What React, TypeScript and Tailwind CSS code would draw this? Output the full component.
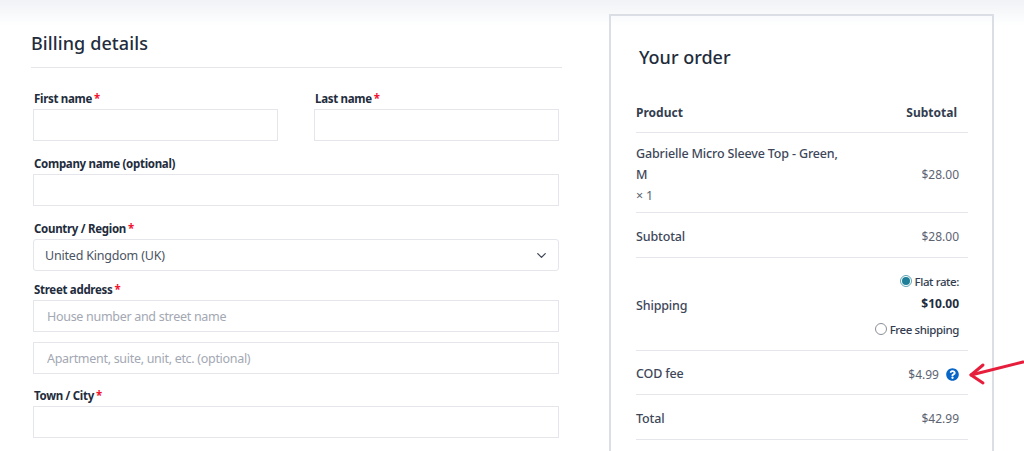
import type { ReactNode } from "react";
import { FaQuestionCircle } from "react-icons/fa";
import { ChevronDown } from "lucide-react";

function Label({ text, required }: { text: string; required?: boolean }) {
  return (
    <label className="block h-[21px] pl-px text-[11.5px] leading-[21px] font-bold tracking-[-0.3px] text-[#222c3c]">
      {text}
      {required && <span className="ml-[2px] text-[#f0142f]">*</span>}
    </label>
  );
}

function Input({ placeholder }: { placeholder?: string }) {
  return (
    <input
      placeholder={placeholder}
      className="block h-[32px] w-full border-[1.5px] border-[#e4e6ec] bg-white px-[13px] pt-px text-[12.5px] tracking-[-0.3px] outline-none placeholder:text-[#a3a8b3]"
    />
  );
}

function Row({
  label,
  value,
  className,
}: {
  label: ReactNode;
  value: ReactNode;
  className: string;
}) {
  return (
    <div
      className={`flex items-center justify-between border-b border-[#e4e6ec] pt-[4px] pr-[9px] text-[12.5px] font-medium tracking-[-0.15px] text-[#3d4759] ${className}`}
    >
      {label}
      {value}
    </div>
  );
}

function Price({ children }: { children: ReactNode }) {
  return <span className="text-[12px] font-normal tracking-normal text-[#5c6472]">{children}</span>;
}

export default function App() {
  return (
    <div
      className="flex h-[451px] w-[1024px] items-start overflow-hidden bg-[linear-gradient(to_bottom,#f0f2f6,#ffffff_26px)] pt-[14px] pl-[31px]"
      style={{ fontFamily: '"Noto Sans", sans-serif' }}
    >
      <div className="w-[531px]">
        <h3 className="h-[54px] border-b border-[#e4e6ea] pt-[15px] text-[18px] leading-[28px] font-medium tracking-[0.1px] text-[#222c3c]">
          Billing details
        </h3>
        <div className="pt-[20px] pr-[3px] pl-[2px]">
          <div className="grid grid-cols-[245px_245px] gap-x-[36px]">
            <div>
              <Label text="First name" required />
              <Input />
            </div>
            <div>
              <Label text="Last name" required />
              <Input />
            </div>
          </div>
          <div className="mt-[12px]">
            <Label text="Company name (optional)" />
            <Input />
          </div>
          <div className="mt-[12px]">
            <Label text="Country / Region" required />
            <div className="flex h-[32px] items-center justify-between rounded-[3px] border-[1.5px] border-[#e4e6ec] pr-[9px] pl-[11px] text-[12.5px] tracking-[-0.2px] text-[#4b5462]">
              <span className="pt-[2px]">United Kingdom (UK)</span>
              <ChevronDown size={15} strokeWidth={2} className="text-[#3d4759]" />
            </div>
          </div>
          <div className="mt-[8px]">
            <Label text="Street address" required />
            <Input placeholder="House number and street name" />
            <div className="mt-[10px]">
              <Input placeholder="Apartment, suite, unit, etc. (optional)" />
            </div>
          </div>
          <div className="mt-[11px]">
            <Label text="Town / City" required />
            <Input />
          </div>
        </div>
      </div>

      <div className="relative ml-[47px] h-[450px] w-[385px] shrink-0 border-2 border-[#dcdee6] pr-[24px] pl-[25px]">
        <h3 className="ml-[3px] pt-[27px] text-[18px] leading-[28px] font-medium text-[#222c3c]">
          Your order
        </h3>
        <div className="mt-[14px]">
          <div className="flex h-[48px] items-center justify-between border-b border-[#e4e6ec] pt-[9px] pr-[11px] text-[12px] font-bold text-[#333d4f]">
            <span>Product</span>
            <span>Subtotal</span>
          </div>
          <Row
            className="h-[80px]"
            label={
              <div className="w-[212px] leading-[21px]">
                Gabrielle Micro Sleeve Top - Green, M
                <div className="font-normal text-[#5c6472]">× 1</div>
              </div>
            }
            value={<Price>$28.00</Price>}
          />
          <Row label={<span>Subtotal</span>} value={<Price>$28.00</Price>} className="h-[45px]" />
          <Row
            label={<span>Shipping</span>}
            className="h-[93px]"
            value={
              <div className="flex flex-col items-end text-[11.5px] tracking-[-0.4px] text-[#333d4f]">
                <div className="flex h-[21px] items-center gap-[3px]">
                  <span className="mb-[3px] flex h-[12px] w-[12px] items-center justify-center rounded-full border border-[#5da4b4]">
                    <span className="h-[8px] w-[8px] rounded-full bg-[#1f7f99]" />
                  </span>
                  Flat rate:
                </div>
                <div className="h-[21px] text-[12px] leading-[21px] font-bold tracking-normal text-[#222c3c]">$10.00</div>
                <div className="mt-[6px] flex h-[21px] items-center gap-[3px]">
                  <span className="mb-[2px] h-[12px] w-[12px] rounded-full border border-[#8a8f98]" />
                  Free shipping
                </div>
              </div>
            }
          />
          <Row
            label={<span>COD fee</span>}
            className="h-[44px]"
            value={
              <div className="flex items-center gap-[7px]">
                <Price>$4.99</Price>
                <FaQuestionCircle size={13} className="text-[#0866c6]" />
              </div>
            }
          />
          <Row label={<span>Total</span>} value={<Price>$42.99</Price>} className="h-[45px]" />
        </div>
        <svg
          className="absolute top-[344px] left-[356px]"
          width="57"
          height="28"
          viewBox="0 0 57 28"
          fill="none"
          stroke="#e61e3c"
          strokeWidth="3"
          strokeLinecap="round"
          strokeLinejoin="round"
        >
          <path d="M56 2 L4 15" />
          <path d="M16 5 L4 15 L16 23" />
        </svg>
      </div>
    </div>
  );
}
